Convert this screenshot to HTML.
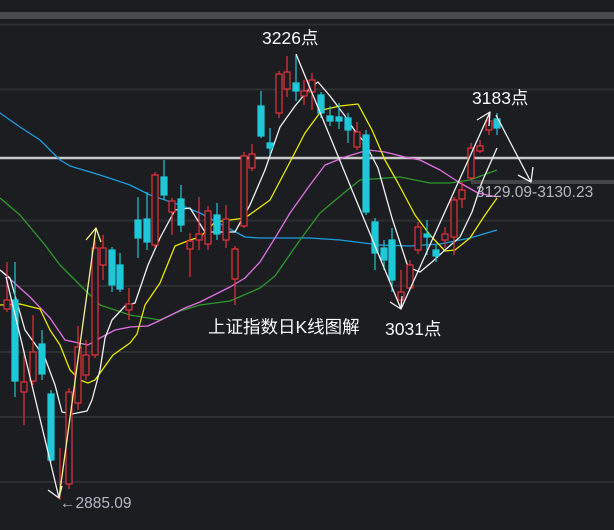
<!DOCTYPE html>
<html><head><meta charset="utf-8"><style>
html,body{margin:0;padding:0;background:#1c1d21;width:614px;height:530px;overflow:hidden}
svg{display:block}
text{font-family:"Liberation Sans","Noto Sans CJK SC",sans-serif}
</style></head><body>
<svg width="614" height="530" viewBox="0 0 614 530">
<rect width="614" height="530" fill="#1c1d21"/>
<rect x="0" y="12" width="614" height="7" fill="#4a4a4c"/>
<g stroke="#2e2f33" stroke-width="2">
<line x1="0" y1="24.5" x2="614" y2="24.5"/>
<line x1="0" y1="89.5" x2="614" y2="89.5"/>
<line x1="0" y1="220.5" x2="614" y2="220.5"/>
<line x1="0" y1="286" x2="614" y2="286"/>
<line x1="0" y1="352" x2="614" y2="352"/>
<line x1="0" y1="417" x2="614" y2="417"/>
<line x1="0" y1="482" x2="614" y2="482"/>
</g>
<line x1="0" y1="158" x2="614" y2="158" stroke="#c8c8c8" stroke-width="2.5"/>
<rect x="471" y="180" width="143" height="4" fill="#444548"/>

<g fill="none" stroke-width="1.3" stroke-linejoin="round">
<polyline stroke="#1a9ee0" points="0,113 20,127 40,140 60,160 70,166 100,175 130,185 150,195 180,205 200,213 245,237 260,238 310,238 340,240 380,245 410,246 440,244 470,238 497,230"/>
<polyline stroke="#2a9a2a" points="0,198 20,215 45,245 60,265 85,290 100,305 130,315 160,320 180,311 200,305 230,301 260,288 275,276 300,240 320,213 345,192 360,180 400,177 430,183 450,183 470,180 497,170"/>
<polyline stroke="#e070e0" points="0,270 30,297 50,318 65,340 88,345 100,338 115,330 130,327 148,326 165,318 185,308 200,302 230,287 245,278 260,262 275,238 290,213 310,185 325,165 345,157 368,150 385,152 405,157 420,160 440,170 460,183 478,193 497,197"/>
<polyline stroke="#e8e800" points="0,305 20,304 40,309 50,330 60,345 70,370 80,380 88,383 95,380 113,355 130,343 137,334 145,305 160,283 175,246 190,240 200,237 215,222 230,220 245,218 270,200 290,162 305,133 322,110 340,106 358,104 372,130 385,160 398,183 415,215 430,235 445,251 455,250 470,238 485,215 497,198"/>
<polyline stroke="#f0f0f0" points="0,270 10,278 25,330 45,358 55,385 62,412 72,414 87,411 92,400 100,370 105,338 112,320 125,306 135,303 148,265 160,238 175,210 190,208 205,232 220,232 235,232 250,205 265,170 280,127 295,106 310,88 318,82 330,96 345,116 355,131 365,143 378,168 392,218 408,267 420,272 432,262 445,250 460,237 472,212 482,182 497,148"/>
</g>

<g>
<g stroke="#e8323c" stroke-width="1.2" fill="#1c1d21">
<line x1="7" y1="262" x2="7" y2="312"/><rect x="4" y="300" width="6" height="9"/>
<line x1="24" y1="350" x2="24" y2="425"/><rect x="21" y="382" width="6" height="10"/>
<line x1="33" y1="315" x2="33" y2="385"/><rect x="30" y="352" width="6" height="29"/>
<line x1="60" y1="448" x2="60" y2="500"/>
<line x1="69" y1="388" x2="69" y2="489"/><rect x="66" y="392" width="6" height="92"/>
<line x1="78" y1="326" x2="78" y2="410"/><rect x="75" y="347" width="6" height="56"/>
<line x1="86" y1="340" x2="86" y2="380"/><rect x="83" y="355" width="6" height="20"/>
<line x1="95" y1="240" x2="95" y2="358"/><rect x="92" y="248" width="6" height="107"/>
<line x1="103" y1="235" x2="103" y2="280"/><rect x="100" y="248" width="6" height="17"/>
<line x1="129" y1="288" x2="129" y2="320"/><rect x="126" y="304" width="6" height="6"/>
<line x1="155" y1="172" x2="155" y2="248"/><rect x="152" y="175" width="6" height="70"/>
<line x1="172" y1="198" x2="172" y2="235"/><rect x="169" y="201" width="6" height="11"/>
<line x1="190" y1="233" x2="190" y2="277"/><rect x="187" y="241" width="6" height="8"/>
<line x1="199" y1="197" x2="199" y2="250"/><rect x="196" y="234" width="6" height="6"/>
<line x1="208" y1="206" x2="208" y2="250"/><rect x="205" y="211" width="6" height="33"/>
<line x1="226" y1="205" x2="226" y2="248"/><rect x="223" y="219" width="6" height="21"/>
<line x1="235" y1="246" x2="235" y2="305"/><rect x="232" y="249" width="6" height="30"/>
<line x1="244" y1="152" x2="244" y2="228"/><rect x="241" y="156" width="6" height="70"/>
<line x1="252" y1="144" x2="252" y2="171"/><rect x="249" y="154" width="6" height="14"/>
<line x1="279" y1="71" x2="279" y2="118"/><rect x="276" y="74" width="6" height="39"/>
<line x1="287" y1="56" x2="287" y2="97"/><rect x="284" y="72" width="6" height="17"/>
<line x1="304" y1="80" x2="304" y2="105"/><rect x="301" y="91" width="6" height="5"/>
<line x1="312" y1="73" x2="312" y2="110"/><rect x="309" y="80" width="6" height="12"/>
<line x1="357" y1="122" x2="357" y2="150"/><rect x="354" y="132" width="6" height="15"/>
<line x1="401" y1="270" x2="401" y2="306"/><rect x="398" y="292" width="6" height="8"/>
<line x1="410" y1="260" x2="410" y2="290"/><rect x="407" y="265" width="6" height="23"/>
<line x1="418" y1="222" x2="418" y2="254"/><rect x="415" y="227" width="6" height="23"/>
<line x1="445" y1="227" x2="445" y2="248"/><rect x="442" y="234" width="6" height="6"/>
<line x1="454" y1="197" x2="454" y2="255"/><rect x="451" y="200" width="6" height="37"/>
<line x1="462" y1="182" x2="462" y2="208"/><rect x="459" y="190" width="6" height="9"/>
<line x1="471" y1="143" x2="471" y2="180"/><rect x="468" y="148" width="6" height="30"/>
<line x1="480" y1="140" x2="480" y2="153"/><rect x="477" y="146" width="6" height="5"/>
<line x1="489" y1="112" x2="489" y2="135"/><rect x="486" y="121" width="6" height="9"/>
</g>
<g stroke="#1ec8d8" stroke-width="1.2" fill="#1ec8d8">
<line x1="15" y1="262" x2="15" y2="397"/><rect x="12" y="300" width="6" height="81"/>
<line x1="42" y1="330" x2="42" y2="380"/><rect x="39" y="344" width="6" height="30"/>
<line x1="51" y1="390" x2="51" y2="462"/><rect x="48" y="394" width="6" height="66"/>
<line x1="112" y1="247" x2="112" y2="292"/><rect x="109" y="250" width="6" height="35"/>
<line x1="120" y1="253" x2="120" y2="292"/><rect x="117" y="265" width="6" height="24"/>
<line x1="138" y1="197" x2="138" y2="258"/><rect x="135" y="220" width="6" height="18"/>
<line x1="147" y1="192" x2="147" y2="250"/><rect x="144" y="219" width="6" height="23"/>
<line x1="164" y1="160" x2="164" y2="200"/><rect x="161" y="177" width="6" height="18"/>
<line x1="181" y1="185" x2="181" y2="232"/><rect x="178" y="199" width="6" height="26"/>
<line x1="217" y1="203" x2="217" y2="240"/><rect x="214" y="215" width="6" height="19"/>
<line x1="261" y1="91" x2="261" y2="138"/><rect x="258" y="106" width="6" height="30"/>
<line x1="270" y1="128" x2="270" y2="155"/><rect x="267" y="143" width="6" height="5"/>
<line x1="296" y1="55" x2="296" y2="101"/><rect x="293" y="83" width="6" height="8"/>
<line x1="321" y1="92" x2="321" y2="118"/><rect x="318" y="95" width="6" height="18"/>
<line x1="330" y1="106" x2="330" y2="126"/><rect x="327" y="116" width="6" height="5"/>
<line x1="339" y1="103" x2="339" y2="129"/><rect x="336" y="117" width="6" height="4"/>
<line x1="348" y1="113" x2="348" y2="143"/><rect x="345" y="118" width="6" height="12"/>
<line x1="366" y1="130" x2="366" y2="215"/><rect x="363" y="135" width="6" height="77"/>
<line x1="375" y1="218" x2="375" y2="270"/><rect x="372" y="222" width="6" height="31"/>
<line x1="384" y1="240" x2="384" y2="270"/><rect x="381" y="248" width="6" height="12"/>
<line x1="392" y1="228" x2="392" y2="292"/><rect x="389" y="240" width="6" height="40"/>
<line x1="427" y1="220" x2="427" y2="255"/><rect x="424" y="234" width="6" height="3"/>
<line x1="436" y1="245" x2="436" y2="262"/><rect x="433" y="250" width="6" height="6"/>
<line x1="497" y1="113" x2="497" y2="135"/><rect x="494" y="119" width="6" height="9"/>
</g>
</g>

<g fill="none" stroke="#f0f0f0" stroke-width="1.3" stroke-linejoin="round">
<polyline points="6,277 59,498"/>
<polyline points="48,490 59,498 62,486"/>
<polyline stroke="#f4f090" points="59,498 96,228"/>
<polyline stroke="#f4f090" points="86,240 96,228 101,242"/>
<polyline points="296,54 401,309"/>
<polyline points="390,302 401,309 402,296"/>
<polyline points="401,309 490,112"/>
<polyline points="477,120 490,112 489,126"/>
<polyline points="496,115 531,182"/>
<polyline points="518,175 531,182 533,167"/>
</g>

<g fill="#ffffff" font-size="17.5" stroke="#000" stroke-width="0.3" paint-order="stroke">
<text x="262" y="44">3226点</text>
<text x="472" y="104">3183点</text>
<text x="385" y="335">3031点</text>
<text x="208" y="333">上证指数日K线图解</text>
</g>
<g fill="#b4b8c4" font-size="15.5">
<text x="60" y="508">←2885.09</text>
<text x="476" y="197">3129.09-3130.23</text>
</g>
</svg>
</body></html>
